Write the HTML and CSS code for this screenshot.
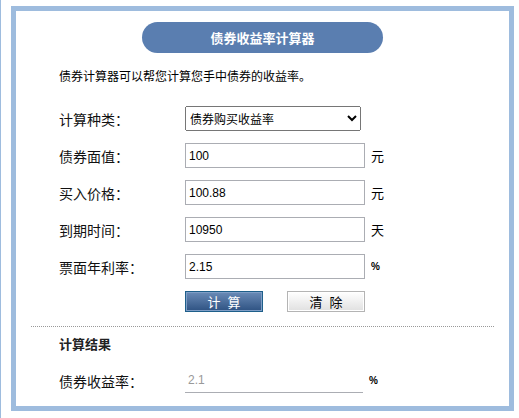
FILE: index.html
```html
<!DOCTYPE html>
<html lang="zh-CN">
<head>
    <meta charset="UTF-8">
    <meta name="viewport" content="width=device-width, initial-scale=1.0">
    <title>债券收益率计算器</title>
    <link rel="stylesheet" href="styles.css">
</head>
<body>

    <div class="page">
        <div class="calc">
            <h1 class="calc-title">债券收益率计算器</h1>
            <p class="intro">债券计算器可以帮您计算您手中债券的收益率。</p>

            <form class="calc-form" id="calc-form">
                <div class="row">
                    <label class="row-label" for="type">计算种类：</label>
                    <select class="field-select" id="type" name="type">
                        <option value="buy">债券购买收益率</option>
                        <option value="sell">债券出售收益率</option>
                        <option value="hold">债券持有期间收益率</option>
                    </select>
                </div>
                <div class="row">
                    <label class="row-label" for="face">债券面值：</label>
                    <input class="field" type="text" id="face" name="face" value="100">
                    <span class="unit">元</span>
                </div>
                <div class="row">
                    <label class="row-label" for="price">买入价格：</label>
                    <input class="field" type="text" id="price" name="price" value="100.88">
                    <span class="unit">元</span>
                </div>
                <div class="row">
                    <label class="row-label" for="days">到期时间：</label>
                    <input class="field" type="text" id="days" name="days" value="10950">
                    <span class="unit">天</span>
                </div>
                <div class="row">
                    <label class="row-label" for="rate">票面年利率：</label>
                    <input class="field" type="text" id="rate" name="rate" value="2.15">
                    <span class="unit unit-pct">%</span>
                </div>

                <div class="actions">
                    <button type="submit" class="btn btn-primary">计 算</button>
                    <button type="reset" class="btn btn-plain">清 除</button>
                </div>
            </form>

            <div class="divider"></div>

            <h2 class="result-title">计算结果</h2>
            <div class="row result-row">
                <label class="row-label" for="result">债券收益率：</label>
                <input class="field field-result" type="text" id="result" value="2.1" readonly>
                <span class="unit unit-pct">%</span>
            </div>
        </div>
    </div>

</body>
</html>
```

FILE: styles.css
```css
body {
    margin: 0;
    font-family: "Noto Sans CJK SC", "Liberation Sans", sans-serif;
    color: #000;
    background-color: #ffffff;
}
.page {
    border-left: 1px solid #9ebcde;
    padding: 6px 5px 0 10px;
    min-height: 100vh;
    box-sizing: border-box;
}
.calc {
    border: 5px solid #9ebcde;
    height: 405px;
    box-sizing: border-box;
}
.calc-title {
    width: 241px;
    height: 31px;
    margin: 11px auto 0;
    border-radius: 16px;
    background-color: #5a7eb0;
    color: #ffffff;
    font-size: 13px;
    font-weight: bold;
    line-height: 31px;
    text-align: center;
}
.intro {
    margin: 14px 0 0 43px;
    font-size: 12px;
    line-height: 18px;
}
.calc-form {
    margin: 21px 0 0 43px;
}
.row {
    display: flex;
    align-items: center;
    height: 25px;
    margin-bottom: 12px;
}
.row-label {
    width: 126px;
    flex-shrink: 0;
    font-size: 14px;
    color: #111;
}
.field-select {
    width: 176px;
    height: 25px;
    font-family: "Noto Sans CJK SC", sans-serif;
    font-size: 12px;
    padding-left: 0;
}
.field {
    width: 180px;
    height: 25px;
    box-sizing: border-box;
    border: 1px solid #abadb3;
    padding: 0 0 0 3px;
    margin: 0;
    font-family: "Liberation Sans", sans-serif;
    font-size: 12px;
    color: #000;
    outline: none;
}
.unit {
    margin-left: 6px;
    font-size: 13px;
}
.unit-pct {
    font-family: "Liberation Sans", sans-serif;
    font-size: 10px;
    font-weight: bold;
}
.actions {
    display: flex;
    gap: 24px;
    margin: 2px 0 0 126px;
}
.btn {
    width: 78px;
    height: 21px;
    padding: 0;
    font-family: "Noto Sans CJK SC", sans-serif;
    font-size: 13px;
    line-height: 19px;
    letter-spacing: 2px;
    text-indent: 2px;
    cursor: pointer;
}
.btn-primary {
    background: linear-gradient(#6a8bb7, #2e5282);
    border: 1px solid #1e5f8a;
    box-shadow: inset 0 0 0 1px #7f9ec6;
    color: #ffffff;
}
.btn-plain {
    background: linear-gradient(#ffffff, #e0e0e0);
    border: 1px solid #b4b4b4;
    box-shadow: inset 0 0 0 1px #ffffff;
    color: #000;
}
.divider {
    margin: 14px 15px 0;
    border-top: 1px dotted #999;
}
.result-title {
    margin: 8px 0 0 43px;
    font-size: 13px;
    font-weight: bold;
    line-height: 18px;
    color: #222;
}
.result-row {
    margin: 15px 0 0 43px;
}
.field-result {
    width: 178px;
    border: none;
    border-bottom: 1px solid #abadb3;
    color: #999;
    background: transparent;
}
```
